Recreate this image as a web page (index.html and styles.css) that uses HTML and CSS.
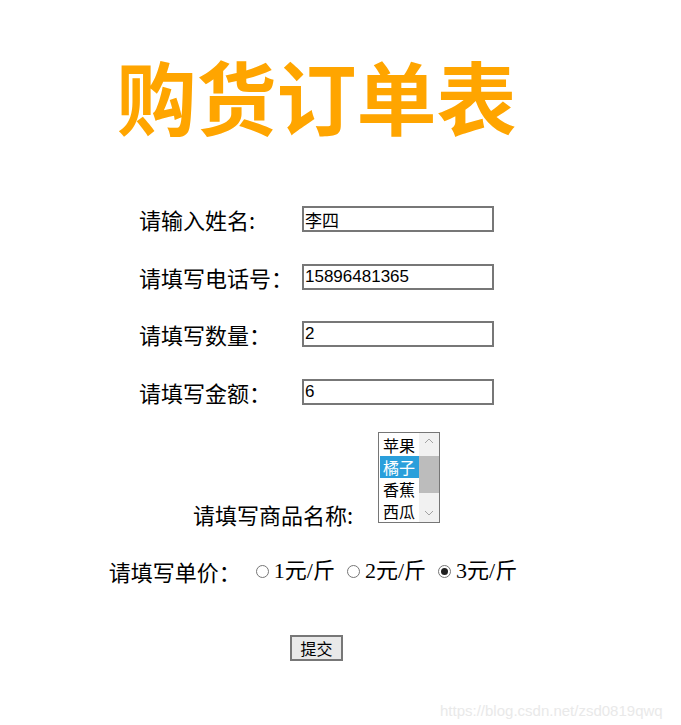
FILE: index.html
```html
<!DOCTYPE html>
<html lang="zh-CN">
<head>
  <meta charset="UTF-8">
  <title>购货订单表</title>
  <link rel="stylesheet" href="styles.css">
</head>
<body>
  <div class="page">
    <h1 class="title">购货订单表</h1>

    <form class="order" onsubmit="return false">
      <div class="fields">
        <label class="lbl">请输入姓名:</label>
        <input class="txt" type="text" value="李四">
        <label class="lbl">请填写电话号：</label>
        <input class="txt" type="text" value="15896481365">
        <label class="lbl">请填写数量：</label>
        <input class="txt" type="text" value="2">
        <label class="lbl">请填写金额：</label>
        <input class="txt" type="text" value="6">
      </div>

      <div class="goods-row">
        <span class="lbl">请填写商品名称:</span>
        <div class="listbox">
          <div class="options">
            <div class="opt">苹果</div>
            <div class="opt sel">橘子</div>
            <div class="opt">香蕉</div>
            <div class="opt">西瓜</div>
          </div>
          <div class="scroll">
            <div class="arrow"><svg width="10" height="6" viewBox="0 0 10 6"><path d="M1 5 L5 1 L9 5" fill="none" stroke="#a3a3a3" stroke-width="1"/></svg></div>
            <div class="track"><div class="thumb"></div></div>
            <div class="arrow"><svg width="10" height="6" viewBox="0 0 10 6"><path d="M1 1 L5 5 L9 1" fill="none" stroke="#a3a3a3" stroke-width="1"/></svg></div>
          </div>
        </div>
      </div>

      <div class="price-row">
        <span class="lbl">请填写单价：</span>
        <span class="radios">
          <label><span class="radio"></span>1元/斤</label>
          <label><span class="radio"></span>2元/斤</label>
          <label><span class="radio on"></span>3元/斤</label>
        </span>
      </div>

      <div class="submit-row">
        <button class="btn" type="submit">提交</button>
      </div>
    </form>

    <div class="watermark">https://blog.csdn.net/zsd0819qwq</div>
  </div>
</body>
</html>
```

FILE: styles.css
```css
* { box-sizing: border-box; }
body {
  margin: 0;
  background: #fff;
  color: #000;
  font-family: "Noto Sans CJK SC", sans-serif;
}
.page {
  width: 633px;
  min-height: 725px;
  text-align: center;
}

/* titolo */
.title {
  margin: 0;
  padding-top: 34px;
  color: #ffa500;
  font-size: 80px;
  font-weight: 700;
  line-height: 120px;
}

.order { margin-top: 50px; }
.lbl {
  font-size: 22px;
  line-height: 30px;
  text-align: left;
}

/* campi testo */
.fields {
  display: grid;
  grid-template-columns: 163px 192px;
  row-gap: 27.5px;
  width: 355px;
  margin: 0 auto;
  align-items: center;
}
.txt {
  width: 192px;
  height: 26px;
  border: 2px solid #777;
  padding: 0 1px;
  font-family: "Liberation Sans", "Noto Sans CJK SC", sans-serif;
  font-size: 17px;
  color: #000;
  outline: none;
}

/* select finto */
.goods-row {
  display: flex;
  justify-content: center;
  align-items: flex-end;
  gap: 25px;
  margin-top: 25px;
}
.goods-row .lbl { line-height: 26px; margin-bottom: -4px; }
.listbox {
  display: flex;
  width: 62px;
  height: 91px;
  border: 1px solid #767676;
  background: #fff;
  overflow: hidden;
}
.options { width: 40px; padding-top: 1px; padding-left: 1px; }
.opt {
  height: 22px;
  line-height: 22px;
  font-size: 16px;
  padding-left: 3px;
  text-align: left;
  white-space: nowrap;
  overflow: hidden;
}
.opt.sel { background: #2a9fdb; color: #fff; }
.scroll {
  width: 20px;
  display: flex;
  flex-direction: column;
  background: #f1f1f1;
}
.arrow {
  flex: none;
  height: 17px;
  display: flex;
  align-items: center;
  justify-content: center;
}
.track { flex: 1; width: 100%; padding-top: 6px; }
.thumb { height: 37px; background: #bcbcbc; }

/* radio */
.price-row {
  display: flex;
  justify-content: center;
  align-items: center;
  margin-top: 33px;
  margin-left: -7px;
}
.price-row .lbl { margin-right: 15px; }
.radios {
  display: flex;
  gap: 12px;
  font-family: "Liberation Serif", "Noto Sans CJK SC", serif;
  font-size: 22px;
  line-height: 30px;
}
.radios label { display: flex; align-items: center; gap: 5px; }
.radio {
  width: 13px;
  height: 13px;
  margin-top: 2px;
  border: 1px solid #767676;
  border-radius: 50%;
  background: #fff;
  position: relative;
}
.radio.on::after {
  content: "";
  position: absolute;
  left: 2px; top: 2px;
  width: 7px; height: 7px;
  border-radius: 50%;
  background: #1f1f1f;
}

/* bottone */
.submit-row { margin-top: 49px; }
.btn {
  width: 53px;
  height: 26px;
  border: 2px solid #777;
  background: #e9e9e9;
  font-family: "Noto Sans CJK SC", sans-serif;
  font-size: 16px;
  line-height: 20px;
  padding: 0;
  color: #000;
}

.watermark {
  position: absolute;
  left: 440px;
  top: 701px;
  color: #e9e9e9;
  font-family: "Liberation Sans", sans-serif;
  font-size: 15px;
  line-height: 20px;
}
```
